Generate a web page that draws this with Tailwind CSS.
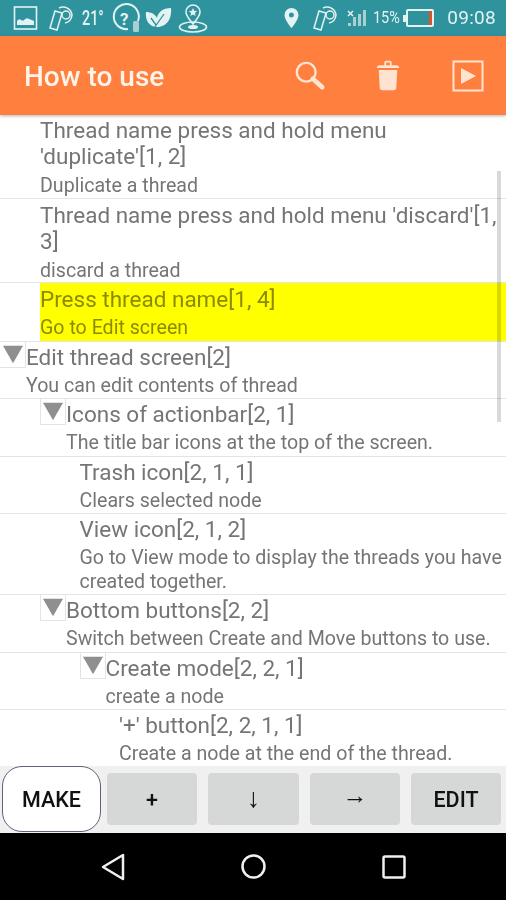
<!DOCTYPE html>
<html lang="en">
<head>
  <meta charset="UTF-8">
  <meta name="viewport" content="width=device-width, initial-scale=1.0">
  <title>How to use</title>
  <script src="https://cdn.jsdelivr.net/npm/@tailwindcss/browser@4"></script>
</head>
<body class="bg-white">
  <div class="w-[506px] h-[900px] flex flex-col overflow-hidden font-['Roboto',sans-serif] relative blur-[0.4px]">

    <!-- status bar -->
    <div class="h-[36px] bg-[#2f939e] flex items-center text-[#e3f2f3] shrink-0">
      <div class="flex items-center pl-[13px]">
        <svg width="26" height="26" viewBox="0 0 26 26" fill="none" stroke="currentColor" stroke-width="1.6"><rect x="1.5" y="2" width="22" height="22"/><path d="M4 20v-4q2-3 4-1 2 1 3 0 3-3 5-1 3 1 5 2v4z" fill="currentColor" stroke="none"/></svg>
        <svg class="ml-[9px]" width="26" height="30" viewBox="0 0 26 30" fill="none" stroke="currentColor" stroke-width="1.5"><path d="M7 8l7 2-5 17-7-2zM11 5a9 9 0 0 1 13 7 9 9 0 0 1-7 8"/><circle cx="18" cy="12" r="4"/></svg>
        <span class="ml-[8px] text-[20px] font-medium w-[25px] scale-x-[0.72] origin-left">21°</span>
        <svg class="ml-[3px]" width="32" height="32" viewBox="0 0 32 32" fill="none" stroke="currentColor" stroke-width="2"><path d="M18 27a12.500 12.500 0 1 1 10-8"/><text x="10" y="23" font-size="17" font-weight="700" fill="currentColor" stroke="none" font-family="Roboto">?</text><rect x="23" y="19" width="6" height="11" rx="1.500" fill="#a9cfd3" stroke="none"/></svg>
        <svg class="ml-[3px]" width="27" height="30" viewBox="0 0 27 30"><path d="M12 24C4 24 0 17 1 9c5 0 9 2 11 6 1-6 6-10 14-10 1 9-3 19-14 19z" fill="currentColor"/><path d="M7 28L19 11M11 22l-5-7" stroke="#2f939e" stroke-width="1.300" fill="none"/></svg>
        <svg class="ml-[6px]" width="30" height="32" viewBox="0 0 30 32" fill="none" stroke="currentColor" stroke-width="1.600"><path d="M15 22c-4-5-7-8-7-12a7 7 0 0 1 14 0c0 4-3 7-7 12z"/><path d="M15 6l1.200 2.800 3 .2-2.300 2 .7 3-2.600-1.600-2.600 1.600.7-3-2.300-2 3-.2z" fill="currentColor" stroke="none"/><ellipse cx="15" cy="25" rx="13.500" ry="5"/><ellipse cx="15" cy="25" rx="5" ry="2" fill="currentColor" stroke="none"/></svg>
      </div>
      <div class="ml-auto flex items-center pr-[10px]">
        <svg width="15" height="20" viewBox="0 0 15 20"><path fill-rule="evenodd" d="M7.500 0a7 7 0 0 1 7 7c0 5-7 13-7 13S.5 12 .5 7a7 7 0 0 1 7-7zm0 4.500a2.500 2.500 0 1 0 0 5 2.500 2.500 0 0 0 0-5z" fill="currentColor"/></svg>
        <svg class="ml-[13px]" width="26" height="30" viewBox="0 0 26 30" fill="none" stroke="currentColor" stroke-width="1.500"><path d="M7 8l7 2-5 17-7-2zM11 5a9 9 0 0 1 13 7 9 9 0 0 1-7 8"/><circle cx="18" cy="12" r="4"/></svg>
        <svg class="ml-[8px]" width="22" height="20" viewBox="0 0 22 20" fill="#a9cfd3"><path d="M2 18h3v-3H2zM7 18h3V9H7zM12 18h3V6h-3zM17 18h3V2h-3z"/><path d="M2 3l5 5M7 3L2 8" stroke="currentColor" stroke-width="1.500"/></svg>
        <span class="ml-[5px] text-[16px] w-[30px] scale-x-[0.9] origin-left">15%</span>
        <div class="ml-[3px] w-[28px] h-[18px] border-2 border-[#e3f2f3] rounded-[2px] flex justify-end relative">
          <div class="w-[3px] bg-[#d9542b]"></div>
          <div class="absolute left-[-5px] top-[4px] w-[3px] h-[7px] bg-[#e3f2f3]"></div>
        </div>
        <span class="ml-[13px] text-[19px] tracking-[0.3px]">09:08</span>
      </div>
    </div>

    <!-- action bar -->
    <div class="h-[79px] bg-[#ff7f3f] flex items-center shrink-0 shadow-[0_1px_3px_rgba(0,0,0,0.3)] relative z-10">
      <span class="ml-[24px] mt-[2px] text-[28px] font-medium text-[#fff3ea]">How to use</span>
      <div class="ml-auto flex items-center">
        <svg width="32" height="32" viewBox="0 0 34 34" fill="none" stroke="#ffe3d1"><circle cx="13" cy="13" r="10" stroke-width="2.500"/><path d="M20 20l10 9" stroke-width="5" stroke-linecap="round"/></svg>
        <svg class="ml-[50px]" width="24" height="33" viewBox="0 0 26 34" fill="#ffe3d1"><path d="M1 8q0-2 3-2h5V3q0-2 2-2h4q2 0 2 2v3h5q3 0 3 2v1H1zM11 3v3h4V3zM3 11h20l-1 19q0 3-3 3H7q-3 0-3-3z"/></svg>
        <svg class="ml-[52px] mr-[22px]" width="32" height="32" viewBox="0 0 32 32" fill="none"><rect x="1.500" y="1.500" width="29" height="29" stroke="#ffe3d1" stroke-width="2"/><path d="M9 8l15 8-15 8z" fill="#ffe3d1"/></svg>
      </div>
    </div>

    <!-- thread list -->
    <div class="flex-1 overflow-hidden relative text-[#757575]">
      <div class="absolute right-[5px] top-[56px] w-[4px] h-[251px] bg-black/15 z-10"></div>

      <div class="h-[84px] border-b border-[#e4e4e4] pl-[40px]">
        <div class="text-[22.500px] leading-[26px] pt-[2px]">Thread name press and hold menu<br>'duplicate'[1, 2]</div>
        <div class="text-[19.600px] leading-[24px] mt-[5px]">Duplicate a thread</div>
      </div>
      <div class="h-[84px] border-b border-[#e4e4e4] pl-[40px]">
        <div class="text-[22.500px] leading-[26px] pt-[3px]">Thread name press and hold menu 'discard'[1,<br>3]</div>
        <div class="text-[19.600px] leading-[24px] mt-[5px]">discard a thread</div>
      </div>
      <div class="h-[58.500px] pl-[40px] border-b border-[#e4e4e4]">
        <div class="bg-[#ffff00] h-full text-[#8b8b00]">
          <div class="text-[22.500px] leading-[26px] pt-[3px]">Press thread name[1, 4]</div>
          <div class="text-[19.600px] leading-[24px] mt-[4px]">Go to Edit screen</div>
        </div>
      </div>
      <div class="h-[57.500px] border-b border-[#e4e4e4] flex">
        <div class="w-[26px] h-[26px] border-b border-r border-[#e4e4e4] flex justify-center pt-[3px] shrink-0">
          <svg width="20" height="19" viewBox="0 0 22 19"><path d="M0 0h22L11 19z" fill="#8f8f8f"/></svg>
        </div>
        <div>
          <div class="text-[22.500px] leading-[26px] pt-[2px]">Edit thread screen[2]</div>
          <div class="text-[19.600px] leading-[24px] mt-[4px]">You can edit contents of thread</div>
        </div>
      </div>
      <div class="h-[57.500px] border-b border-[#e4e4e4] flex pl-[40px]">
        <div class="w-[26px] h-[26px] border-b border-r border-l border-[#e4e4e4] flex justify-center pt-[3px] shrink-0">
          <svg width="20" height="19" viewBox="0 0 22 19"><path d="M0 0h22L11 19z" fill="#8f8f8f"/></svg>
        </div>
        <div>
          <div class="text-[22.500px] leading-[26px] pt-[2px]">Icons of actionbar[2, 1]</div>
          <div class="text-[19.600px] leading-[24px] mt-[4px]">The title bar icons at the top of the screen.</div>
        </div>
      </div>
      <div class="h-[57.500px] border-b border-[#e4e4e4] pl-[79.500px]">
        <div class="text-[22.500px] leading-[26px] pt-[2px]">Trash icon[2, 1, 1]</div>
        <div class="text-[19.600px] leading-[24px] mt-[4px]">Clears selected node</div>
      </div>
      <div class="h-[81px] border-b border-[#e4e4e4] pl-[79.500px]">
        <div class="text-[22.500px] leading-[26px] pt-[2px]">View icon[2, 1, 2]</div>
        <div class="text-[19.600px] leading-[24px] mt-[4px]">Go to View mode to display the threads you have<br>created together.</div>
      </div>
      <div class="h-[57.500px] border-b border-[#e4e4e4] flex pl-[40px]">
        <div class="w-[26px] h-[26px] border-b border-r border-l border-[#e4e4e4] flex justify-center pt-[3px] shrink-0">
          <svg width="20" height="19" viewBox="0 0 22 19"><path d="M0 0h22L11 19z" fill="#8f8f8f"/></svg>
        </div>
        <div>
          <div class="text-[22.500px] leading-[26px] pt-[2px]">Bottom buttons[2, 2]</div>
          <div class="text-[19.600px] leading-[24px] mt-[4px]">Switch between Create and Move buttons to use.</div>
        </div>
      </div>
      <div class="h-[57.500px] border-b border-[#e4e4e4] flex pl-[79.500px]">
        <div class="w-[26px] h-[26px] border-b border-r border-l border-[#e4e4e4] flex justify-center pt-[3px] shrink-0">
          <svg width="20" height="19" viewBox="0 0 22 19"><path d="M0 0h22L11 19z" fill="#8f8f8f"/></svg>
        </div>
        <div>
          <div class="text-[22.500px] leading-[26px] pt-[2px]">Create mode[2, 2, 1]</div>
          <div class="text-[19.600px] leading-[24px] mt-[4px]">create a node</div>
        </div>
      </div>
      <div class="h-[57.500px] pl-[119px]">
        <div class="text-[22.500px] leading-[26px] pt-[2px]">'+' button[2, 2, 1, 1]</div>
        <div class="text-[19.600px] leading-[24px] mt-[4px]">Create a node at the end of the thread.</div>
      </div>
    </div>

    <!-- bottom buttons -->
    <div class="h-[67px] bg-[#f0f0f0] shrink-0 flex items-center pl-[2px] pb-[1px] text-[#111] font-medium">
      <button class="w-[99px] h-[66px] pt-[2px] bg-white border border-[#5e6278] rounded-[20px] text-[21.500px]">MAKE</button>
      <button class="ml-[6px] w-[90px] h-[52px] pt-[2px] bg-[#d6d7d7] rounded-[4px] text-[21.500px]">+</button>
      <button class="ml-[11px] w-[91px] h-[52px] pb-[2px] bg-[#d6d7d7] rounded-[4px] text-[27px] font-normal font-['Liberation_Sans']">↓</button>
      <button class="ml-[11px] w-[90px] h-[52px] pb-[6px] bg-[#d6d7d7] rounded-[4px] text-[25px] font-normal font-['Liberation_Sans']">→</button>
      <button class="ml-[11px] w-[90px] h-[52px] pt-[2px] bg-[#d6d7d7] rounded-[4px] text-[21.500px]">EDIT</button>
    </div>

    <!-- nav bar -->
    <div class="h-[67px] bg-black shrink-0 relative flex items-center">
      <svg class="ml-[101px]" width="24" height="28" viewBox="0 0 24 28" fill="none" stroke="#f0f0f0" stroke-width="2.500" stroke-linejoin="round"><path d="M22 2v24L2 14z"/></svg>
      <svg class="ml-[116px]" width="25" height="25" viewBox="0 0 25 25" fill="none" stroke="#f0f0f0" stroke-width="2.500"><circle cx="12.500" cy="12.500" r="11"/></svg>
      <svg class="ml-[116px]" width="24" height="24" viewBox="0 0 24 24" fill="none" stroke="#f0f0f0" stroke-width="2.500"><rect x="1.500" y="1.500" width="21" height="21" rx="1.500"/></svg>
    </div>
  </div>
</body>
</html>
